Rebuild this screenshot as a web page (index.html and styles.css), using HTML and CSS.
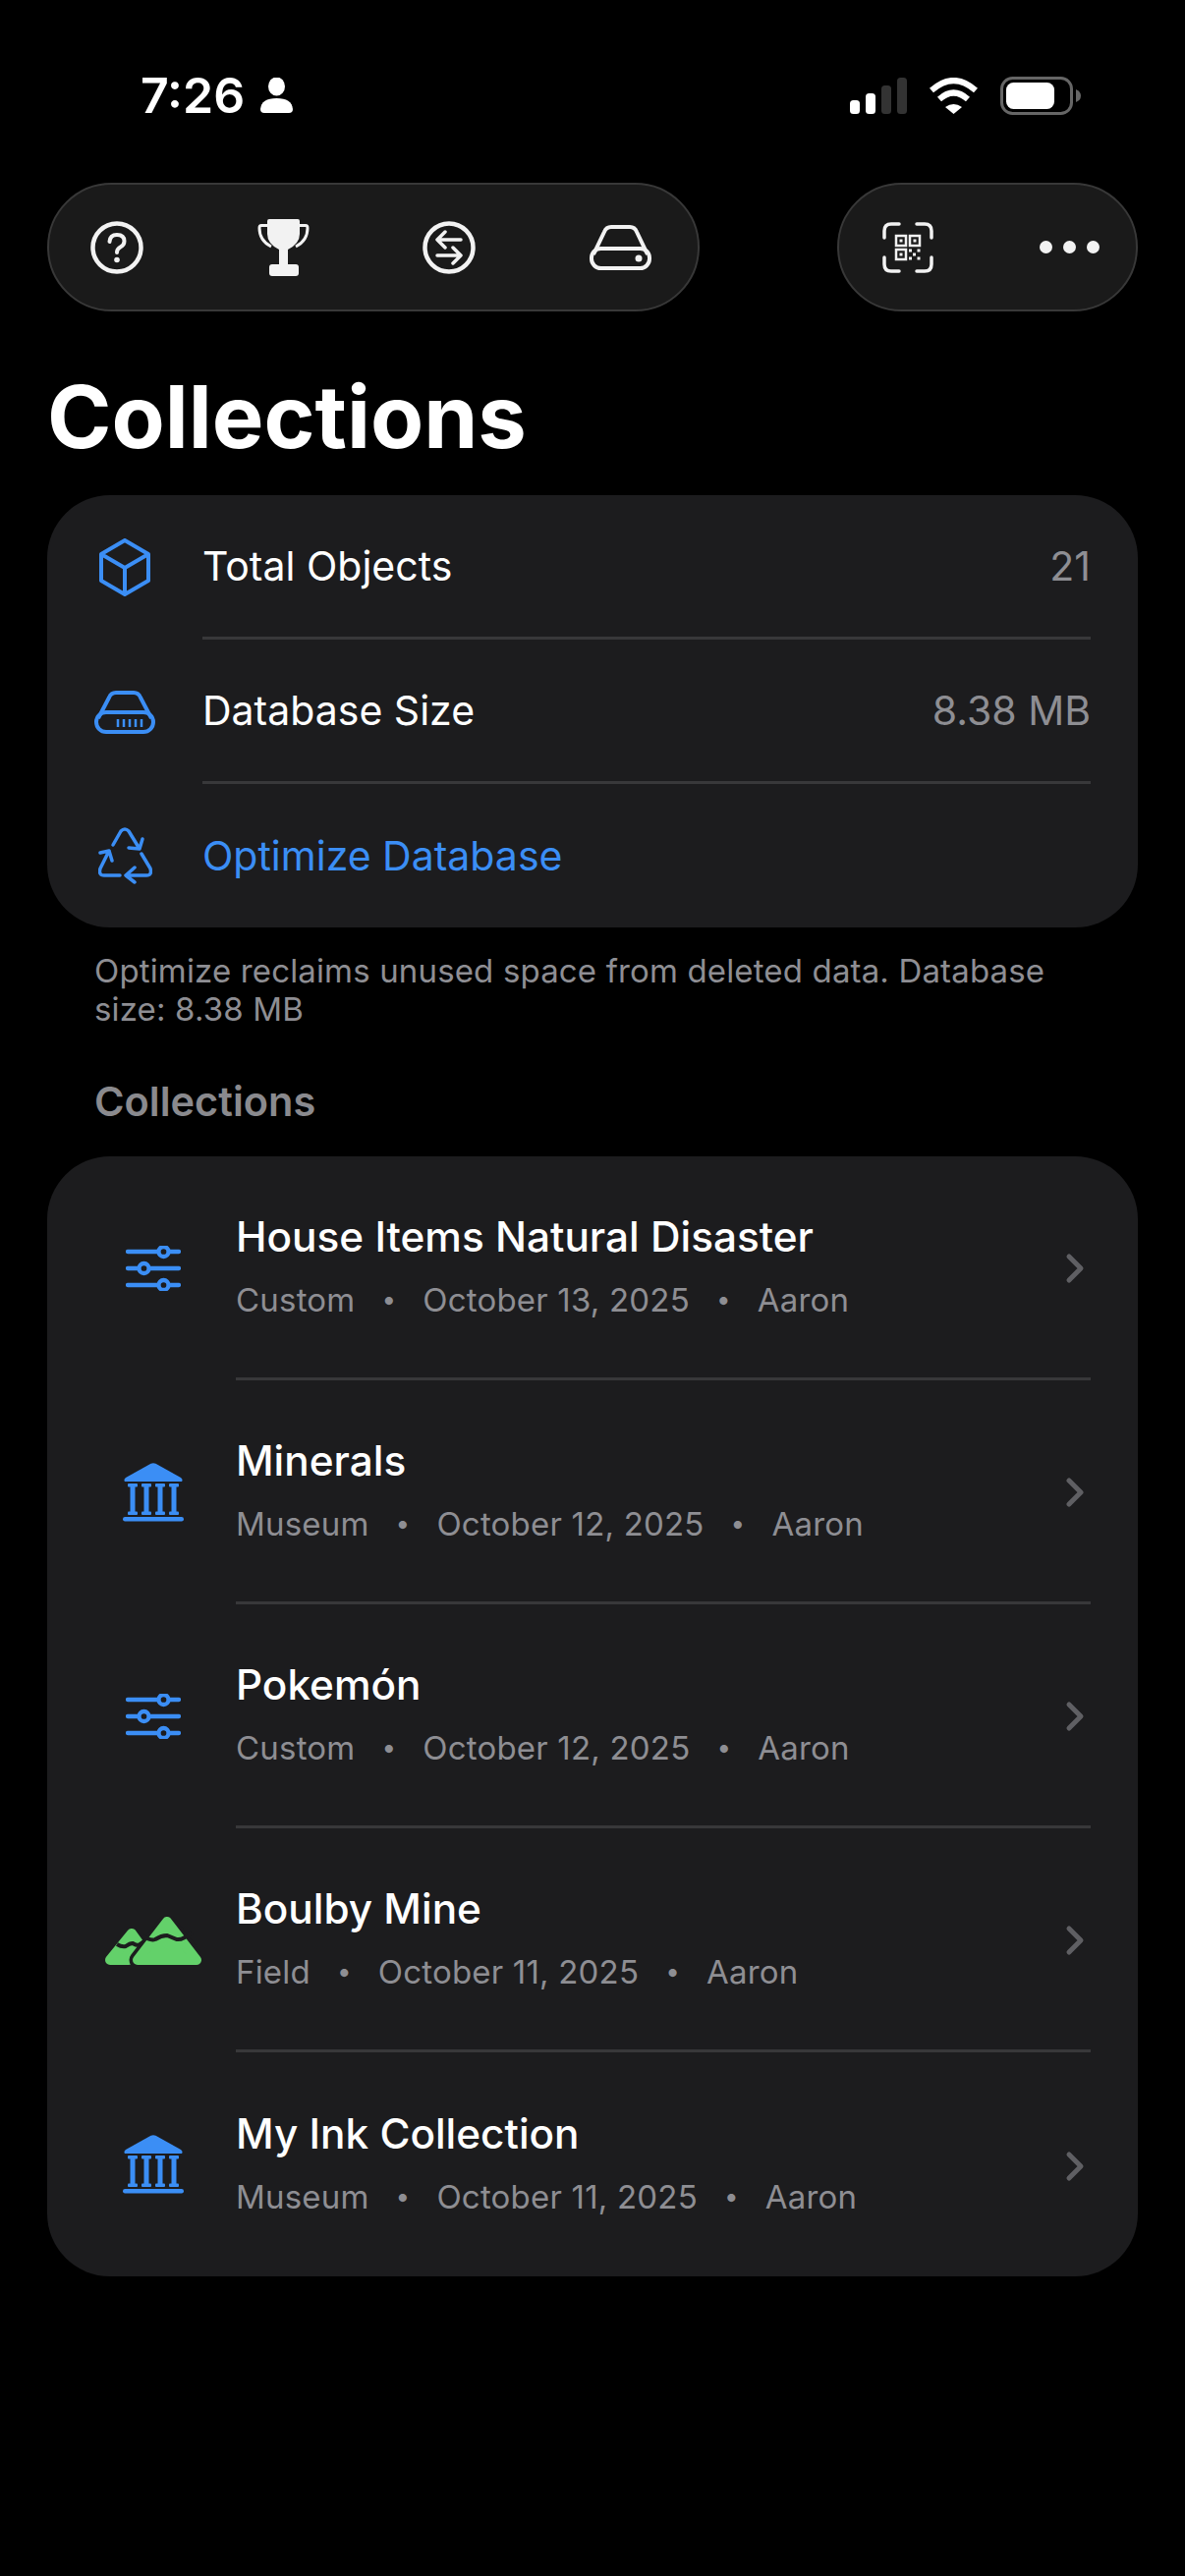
FILE: index.html
```html
<!DOCTYPE html>
<html lang="en">
<head>
    <meta charset="UTF-8">
    <meta name="viewport" content="width=device-width, initial-scale=1.0">
    <title>Collections</title>
    <link rel="stylesheet" href="styles.css">
</head>
<body>
    <svg class="defs" width="0" height="0">
        <symbol id="sliders" viewBox="0 0 56 46">
            <g fill="none" stroke="#3b8ef5" stroke-width="4.300" stroke-linecap="round">
                <path d="M2 6H33M44 6H54M2 23H13M24 23H54M2 40H33M44 40H54"/>
                <circle cx="38.500" cy="6" r="5"/>
                <circle cx="18.500" cy="23" r="5"/>
                <circle cx="38.500" cy="40" r="5"/>
            </g>
        </symbol>
        <symbol id="museum" viewBox="0 0 62 60">
            <g fill="#3b8ef5">
                <path d="M28.500 .8 Q31 -.4 33.500 .8 L59 15 Q61.500 17 60 19 H2 Q.5 17 3 15Z"/>
                <rect x="5" y="21" width="10" height="3.500" rx="1"/>
                <rect x="19" y="21" width="10" height="3.500" rx="1"/>
                <rect x="33" y="21" width="10" height="3.500" rx="1"/>
                <rect x="47" y="21" width="10" height="3.500" rx="1"/>
                <rect x="7.500" y="24" width="5" height="26"/>
                <rect x="21.500" y="24" width="5" height="26"/>
                <rect x="35.500" y="24" width="5" height="26"/>
                <rect x="49.500" y="24" width="5" height="26"/>
                <rect x="5" y="49.500" width="10" height="3.500" rx="1"/>
                <rect x="19" y="49.500" width="10" height="3.500" rx="1"/>
                <rect x="33" y="49.500" width="10" height="3.500" rx="1"/>
                <rect x="47" y="49.500" width="10" height="3.500" rx="1"/>
                <rect x="0" y="55" width="62" height="4.500" rx="2.200"/>
            </g>
        </symbol>
        <symbol id="chevron" viewBox="0 0 20 32">
            <path d="M4 4L16 16L4 28" fill="none" stroke="#5f5f63" stroke-width="5" stroke-linecap="round" stroke-linejoin="round"/>
        </symbol>
    </svg>

    <div class="page">
        <div class="status">
            <div class="status-left">
                <span class="time">7:26</span>
                <svg width="33" height="36" viewBox="0 0 33 36"><ellipse cx="16.500" cy="9" rx="8.500" ry="9.500" fill="#fff"/><path d="M0 32Q1 21 16.500 21Q32 21 33 32Q33 36 29 36H4Q0 36 0 32Z" fill="#fff"/></svg>
            </div>
            <div class="status-right">
                <svg width="58" height="37" viewBox="0 0 58 37">
                    <rect x="0" y="23" width="10" height="14" rx="3.500" fill="#fff"/>
                    <rect x="16" y="16" width="10" height="21" rx="3.500" fill="#fff"/>
                    <rect x="32" y="8" width="10" height="29" rx="3.500" fill="#333"/>
                    <rect x="48" y="0" width="10" height="37" rx="3.500" fill="#333"/>
                </svg>
                <svg width="51" height="37" viewBox="0 0 51 37" fill="none" stroke="#fff" stroke-width="6">
                    <path d="M3 13Q25.500 -7 48 13"/>
                    <path d="M11 22Q25.500 9 40 22"/>
                    <path d="M17 30Q25.500 24 34 30L25.500 37Z" fill="#fff" stroke="none"/>
                </svg>
                <svg width="82" height="39" viewBox="0 0 82 39">
                    <rect x="1.500" y="1.500" width="71" height="36" rx="11" fill="none" stroke="#666" stroke-width="3"/>
                    <rect x="6" y="6" width="49" height="27" rx="7.500" fill="#fff"/>
                    <path d="M77 13Q82 15 82 19.500Q82 24 77 26Z" fill="#666"/>
                </svg>
            </div>
        </div>

        <div class="toolbar">
            <div class="pill pill-main">
                <svg width="54" height="54" viewBox="0 0 54 54" fill="none" stroke="#f2f2f2" stroke-width="4.500" stroke-linecap="round">
                    <circle cx="27" cy="27" r="24.500"/>
                    <path d="M19.500 21Q20 14 27 14Q34.500 14 34.500 20.500Q34.500 24.500 30.500 26.500Q27 28.500 27 32" stroke-width="4"/>
                    <circle cx="27" cy="39.500" r="2.800" fill="#f2f2f2" stroke="none"/>
                </svg>
                <svg width="53" height="58" viewBox="0 0 53 58">
                    <path d="M10 2Q10 0 12 0H41Q43 0 43 2V15Q43 25 31 31V46H22V31Q10 25 10 15Z" fill="#f2f2f2"/>
                    <path d="M10 6.500H4Q2 6.500 2 9Q2 22 14 28M43 6.500H49Q51 6.500 51 9Q51 22 39 28" fill="none" stroke="#f2f2f2" stroke-width="3"/>
                    <rect x="12" y="46" width="30" height="12" rx="3" fill="#f2f2f2"/>
                </svg>
                <svg width="54" height="54" viewBox="0 0 54 54" fill="none" stroke="#f2f2f2" stroke-width="4" stroke-linecap="round" stroke-linejoin="round">
                    <circle cx="27" cy="27" r="24.500" stroke-width="4.500"/>
                    <path d="M39 19H15M23 11L15 19L23 27M15 35H39M31 27L39 35L31 43" stroke-width="3.500"/>
                </svg>
                <svg width="63" height="46" viewBox="0 0 63 46" fill="none" stroke="#f2f2f2" stroke-width="4" stroke-linejoin="round">
                    <path d="M4 30L15 7Q17 2 22 2H41Q46 2 48 7L59 30"/>
                    <rect x="2" y="24" width="59" height="20" rx="9.500"/>
                    <circle cx="50" cy="34" r="3.500" fill="#f2f2f2" stroke="none"/>
                </svg>
            </div>
            <div class="pill pill-side">
                <svg width="52" height="52" viewBox="0 0 52 52" fill="none" stroke="#f2f2f2" stroke-linecap="round">
                    <path d="M2 16V9Q2 2 9 2H17M35 2H43Q50 2 50 9V16M50 36V43Q50 50 43 50H35M17 50H9Q2 50 2 43V36" stroke-width="3.500"/>
                    <rect x="14" y="14" width="10" height="10" stroke-width="2.500"/>
                    <rect x="28" y="14" width="10" height="10" stroke-width="2.500"/>
                    <rect x="14" y="28" width="10" height="10" stroke-width="2.500"/>
                    <g fill="#f2f2f2" stroke="none">
                        <rect x="17.500" y="17.500" width="3" height="3"/>
                        <rect x="31.500" y="17.500" width="3" height="3"/>
                        <rect x="17.500" y="31.500" width="3" height="3"/>
                        <rect x="27" y="27.500" width="3" height="3"/>
                        <rect x="35.500" y="27.500" width="3" height="3"/>
                        <rect x="31" y="31.500" width="3" height="3"/>
                        <rect x="27" y="35.500" width="3" height="3"/>
                        <rect x="35.500" y="35.500" width="3" height="3"/>
                    </g>
                </svg>
                <div class="dots"><span></span><span></span><span></span></div>
            </div>
        </div>

        <h1>Collections</h1>

        <div class="card">
            <div class="info-row">
                <div class="info-icon">
                    <svg width="52" height="59" viewBox="0 0 52 59" fill="none" stroke="#3b8ef5" stroke-width="4" stroke-linejoin="round">
                        <path d="M26 2L50 16V43L26 57L2 43V16ZM2 16L26 30L50 16M26 30V57"/>
                    </svg>
                </div>
                <div class="info-body"><span>Total Objects</span><span class="value">21</span></div>
            </div>
            <div class="info-row">
                <div class="info-icon">
                    <svg width="62" height="44" viewBox="0 0 62 44" fill="none" stroke="#3b8ef5" stroke-width="4" stroke-linejoin="round">
                        <path d="M4 28L15 7Q17 2 22 2H40Q45 2 47 7L58 28"/>
                        <rect x="2" y="22" width="58" height="20" rx="10"/>
                        <path d="M24 29V37M30 29V37M36 29V37M42 29V37M48 29V37" stroke-width="2.500"/>
                    </svg>
                </div>
                <div class="info-body"><span>Database Size</span><span class="value">8.38 MB</span></div>
            </div>
            <div class="info-row info-row-last">
                <div class="info-icon">
                    <svg width="55" height="58" viewBox="0 0 55 58" fill="none" stroke="#3b8ef5" stroke-width="3.500" stroke-linecap="round" stroke-linejoin="round">
                        <path d="M15 18L23 4Q27 0 31 4L42 22M31 21L42 22L45 12"/>
                        <path d="M22 49H6Q0 49 2 42L11 24M2 26L11 24L14 34"/>
                        <path d="M44 27L53 42Q55 49 49 49H28M37 41L28 49L37 56"/>
                    </svg>
                </div>
                <div class="info-body link">Optimize Database</div>
            </div>
        </div>

        <p class="note">Optimize reclaims unused space from deleted data. Database size: 8.38 MB</p>
        <h2>Collections</h2>

        <div class="card">
            <div class="col-row">
                <div class="col-icon"><svg width="56" height="46"><use href="#sliders"/></svg></div>
                <div class="col-body">
                    <div class="col-text">
                        <div class="col-title">House Items Natural Disaster</div>
                        <div class="col-meta"><span>Custom</span><span class="sep">•</span><span>October 13, 2025</span><span class="sep">•</span><span>Aaron</span></div>
                    </div>
                    <svg class="chevron" width="20" height="32"><use href="#chevron"/></svg>
                </div>
            </div>
            <div class="col-row">
                <div class="col-icon"><svg width="62" height="60"><use href="#museum"/></svg></div>
                <div class="col-body">
                    <div class="col-text">
                        <div class="col-title">Minerals</div>
                        <div class="col-meta"><span>Museum</span><span class="sep">•</span><span>October 12, 2025</span><span class="sep">•</span><span>Aaron</span></div>
                    </div>
                    <svg class="chevron" width="20" height="32"><use href="#chevron"/></svg>
                </div>
            </div>
            <div class="col-row">
                <div class="col-icon"><svg width="56" height="46"><use href="#sliders"/></svg></div>
                <div class="col-body">
                    <div class="col-text">
                        <div class="col-title">Pokemón</div>
                        <div class="col-meta"><span>Custom</span><span class="sep">•</span><span>October 12, 2025</span><span class="sep">•</span><span>Aaron</span></div>
                    </div>
                    <svg class="chevron" width="20" height="32"><use href="#chevron"/></svg>
                </div>
            </div>
            <div class="col-row">
                <div class="col-icon">
                    <svg width="98" height="49" viewBox="0 0 98 49">
                        <path d="M27 17L40 35L24 44H5Z" fill="#63d16a" stroke="#63d16a" stroke-width="10" stroke-linejoin="round"/>
                        <path d="M12 28Q17 31 21 30Q25 27 28 27Q31 29 34 29L40 25" fill="none" stroke="#1c1c1e" stroke-width="4"/>
                        <path d="M63 5L93 44H33Z" fill="#63d16a" stroke="#1c1c1e" stroke-width="17" stroke-linejoin="round"/>
                        <path d="M63 5L93 44H33Z" fill="#63d16a" stroke="#63d16a" stroke-width="10" stroke-linejoin="round"/>
                        <path d="M38 19Q46 25 51 23Q57 19 63 19Q68 21 73 23Q79 24 88 16" fill="none" stroke="#1c1c1e" stroke-width="4"/>
                    </svg>
                </div>
                <div class="col-body">
                    <div class="col-text">
                        <div class="col-title">Boulby Mine</div>
                        <div class="col-meta"><span>Field</span><span class="sep">•</span><span>October 11, 2025</span><span class="sep">•</span><span>Aaron</span></div>
                    </div>
                    <svg class="chevron" width="20" height="32"><use href="#chevron"/></svg>
                </div>
            </div>
            <div class="col-row">
                <div class="col-icon"><svg width="62" height="60"><use href="#museum"/></svg></div>
                <div class="col-body">
                    <div class="col-text">
                        <div class="col-title">My Ink Collection</div>
                        <div class="col-meta"><span>Museum</span><span class="sep">•</span><span>October 11, 2025</span><span class="sep">•</span><span>Aaron</span></div>
                    </div>
                    <svg class="chevron" width="20" height="32"><use href="#chevron"/></svg>
                </div>
            </div>
        </div>
    </div>
</body>
</html>
```

FILE: styles.css
```css
* {
    box-sizing: border-box;
}

html, body {
    margin: 0;
    padding: 0;
    background-color: #000;
}

body {
    font-family: Inter, "Noto Sans", sans-serif;
    color: #fff;
    height: 2622px;
    overflow: hidden;
}

.defs {
    display: block;
    height: 0;
}

svg {
    display: block;
    flex-shrink: 0;
}

.page {
    padding: 0 48px;
}

.status {
    height: 186px;
    padding: 78px 58px 0 95px;
    display: flex;
    justify-content: space-between;
    align-items: flex-start;
}

.status-left {
    display: flex;
    align-items: center;
    gap: 16px;
}

.time {
    font-size: 50px;
    font-weight: 600;
    line-height: 38px;
}

.status-right {
    display: flex;
    gap: 22px;
    align-items: center;
}

.toolbar {
    display: flex;
    justify-content: space-between;
}

.pill {
    height: 131px;
    border-radius: 66px;
    background-color: #1a1a1a;
    border: 2px solid #383838;
    display: flex;
    justify-content: space-between;
    align-items: center;
}

.pill-main {
    width: 664px;
    padding: 0 47px 0 42px;
}

.pill-side {
    width: 306px;
    padding: 0 37px 0 44px;
}

.dots {
    display: flex;
    gap: 11px;
}

.dots span {
    width: 13px;
    height: 13px;
    border-radius: 50%;
    background-color: #f2f2f2;
}

h1 {
    margin: 0;
    height: 187px;
    padding-top: 57px;
    font-size: 88.500px;
    line-height: 100px;
    font-weight: 700;
}

.card {
    background-color: #1c1c1e;
    border-radius: 64px;
}

.info-row {
    height: 147px;
    display: flex;
    padding-left: 48px;
}

.info-row-last {
    height: 146px;
}

.info-icon {
    width: 62px;
    margin-right: 48px;
    display: flex;
    align-items: center;
    justify-content: center;
}

.info-body {
    flex: 1;
    margin-right: 48px;
    display: flex;
    justify-content: space-between;
    align-items: center;
    font-size: 41px;
    border-bottom: 3px solid #38383a;
}

.info-row-last .info-body {
    border-bottom: none;
}

.value {
    color: #8e8e93;
}

.link {
    color: #3b8ef5;
}

.note {
    margin: 0;
    padding: 25px 48px 0;
    font-size: 33px;
    letter-spacing: 0.150px;
    line-height: 39px;
    color: #8e8e93;
}

h2 {
    margin: 0;
    padding: 50px 48px 0;
    font-size: 41.500px;
    line-height: 48px;
    font-weight: 600;
    color: #8a8a8e;
    height: 130px;
}

.col-row {
    height: 228px;
    display: flex;
    padding-left: 48px;
}

.col-icon {
    width: 120px;
    margin-right: 24px;
    display: flex;
    align-items: center;
    justify-content: center;
}

.col-body {
    flex: 1;
    margin-right: 48px;
    padding-right: 6px;
    display: flex;
    align-items: center;
    justify-content: space-between;
    border-bottom: 3px solid #38383a;
}

.col-row:last-child .col-body {
    border-bottom: none;
}

.col-text {
    padding-bottom: 3px;
}

.chevron {
    margin-top: 3px;
}

.col-title {
    font-size: 42.300px;
    line-height: 50px;
    font-weight: 550;
    margin-bottom: 19px;
}

.col-meta {
    display: flex;
    gap: 27px;
    font-size: 33px;
    letter-spacing: 0.200px;
    line-height: 40px;
    color: #8e8e93;
}

.sep {
    font-size: 26px;
}
```
